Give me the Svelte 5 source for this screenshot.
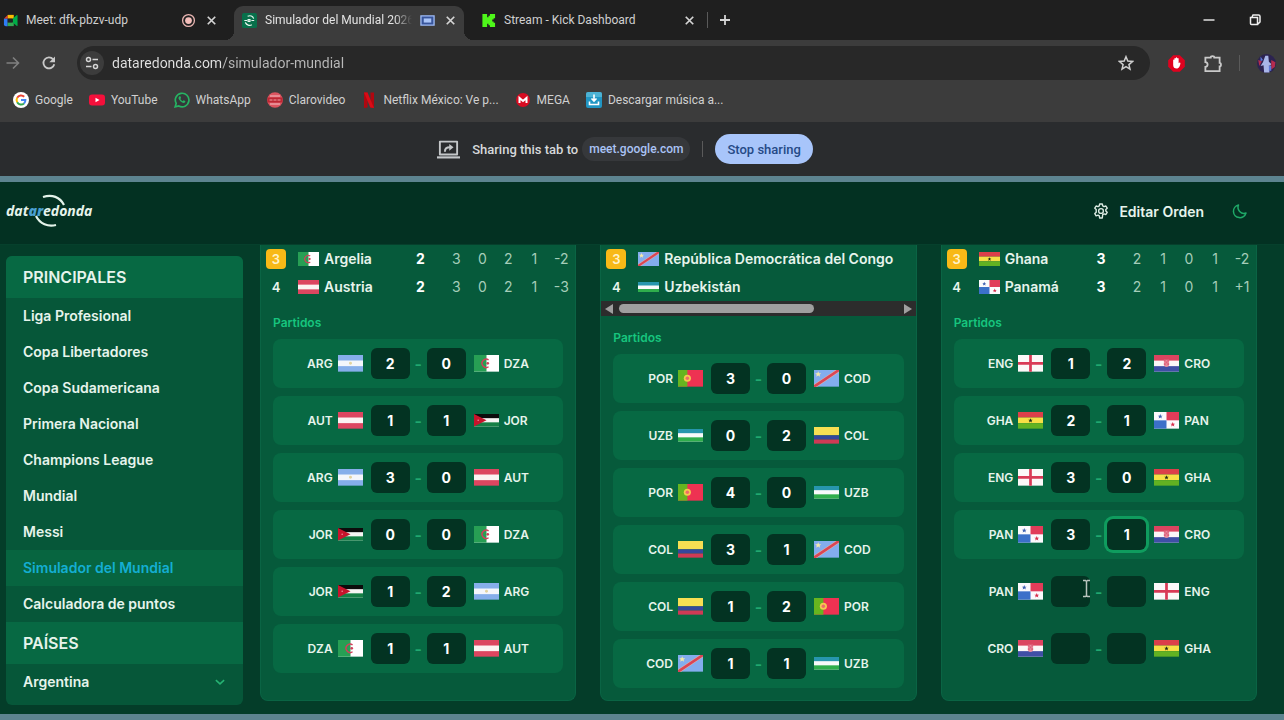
<script>
    let tabs = [
        { icon: "meet", title: "Meet: dfk-pbzv-udp", media: "record" },
        { icon: "redonda", title: "Simulador del Mundial 2026", media: "share", active: true },
        { icon: "kick", title: "Stream - Kick Dashboard" },
    ];

    let bookmarks = [
        { icon: "google", name: "Google" },
        { icon: "youtube", name: "YouTube" },
        { icon: "whatsapp", name: "WhatsApp" },
        { icon: "claro", name: "Clarovideo" },
        { icon: "netflix", name: "Netflix México: Ve p..." },
        { icon: "mega", name: "MEGA" },
        { icon: "download", name: "Descargar música a..." },
    ];

    let links = [
        "Liga Profesional",
        "Copa Libertadores",
        "Copa Sudamericana",
        "Primera Nacional",
        "Champions League",
        "Mundial",
        "Messi",
        "Simulador del Mundial",
        "Calculadora de puntos",
    ];
    let current = "Simulador del Mundial";

    let groups = [
        {
            teams: [
                { pos: 3, code: "DZA", name: "Argelia", stats: ["2", "3", "0", "2", "1", "-2"] },
                { pos: 4, code: "AUT", name: "Austria", stats: ["2", "3", "0", "2", "1", "-3"] },
            ],
            matches: [
                { home: "ARG", away: "DZA", score: ["2", "0"] },
                { home: "AUT", away: "JOR", score: ["1", "1"] },
                { home: "ARG", away: "AUT", score: ["3", "0"] },
                { home: "JOR", away: "DZA", score: ["0", "0"] },
                { home: "JOR", away: "ARG", score: ["1", "2"] },
                { home: "DZA", away: "AUT", score: ["1", "1"] },
            ],
        },
        {
            scroll: true,
            teams: [
                { pos: 3, code: "COD", name: "República Democrática del Congo", stats: [] },
                { pos: 4, code: "UZB", name: "Uzbekistán", stats: [] },
            ],
            matches: [
                { home: "POR", away: "COD", score: ["3", "0"] },
                { home: "UZB", away: "COL", score: ["0", "2"] },
                { home: "POR", away: "UZB", score: ["4", "0"] },
                { home: "COL", away: "COD", score: ["3", "1"] },
                { home: "COL", away: "POR", score: ["1", "2"] },
                { home: "COD", away: "UZB", score: ["1", "1"] },
            ],
        },
        {
            teams: [
                { pos: 3, code: "GHA", name: "Ghana", stats: ["3", "2", "1", "0", "1", "-2"] },
                { pos: 4, code: "PAN", name: "Panamá", stats: ["3", "2", "1", "0", "1", "+1"] },
            ],
            matches: [
                { home: "ENG", away: "CRO", score: ["1", "2"] },
                { home: "GHA", away: "PAN", score: ["2", "1"] },
                { home: "ENG", away: "GHA", score: ["3", "0"] },
                { home: "PAN", away: "CRO", score: ["3", "1"], editing: true },
                { home: "PAN", away: "ENG", score: ["", ""], pointer: true },
                { home: "CRO", away: "GHA", score: ["", ""] },
            ],
        },
    ];
</script>

{#snippet flag(code)}
    <svg class="flag" viewBox={code === "JOR" || code === "UZB" ? "0 0 24 12" : "0 0 24 16"} aria-hidden="true">
        {#if code === "ARG"}
            <path fill="#86aeea" d="M0 0h24v16H0z" />
            <path fill="#f4f6fb" d="M0 5.3h24v5.4H0z" />
            <circle cx="12" cy="8" r="1.4" fill="#e2d3a0" />
        {:else if code === "AUT"}
            <path fill="#dc4660" d="M0 0h24v16H0z" />
            <path fill="#fbf3f2" d="M0 5.3h24v5.4H0z" />
        {:else if code === "DZA"}
            <path fill="#fff" d="M0 0h24v16H0z" />
            <path fill="#279f54" d="M0 0h12v16H0z" />
            <path fill="none" stroke="#d0405a" stroke-width="1.4" d="M14 4.7a4 4 0 1 0 0 6.6" />
            <circle cx="13.2" cy="8" r="1.3" fill="#d0405a" />
        {:else if code === "JOR"}
            <path fill="#f5f5f3" d="M0 0h24v12H0z" />
            <path fill="#0c0c0c" d="M0 0h24v4H0z" />
            <path fill="#158045" d="M0 8h24v4H0z" />
            <path fill="#c8142c" d="M0 0l12 6L0 12z" />
            <circle cx="4" cy="6" r="0.7" fill="#f0a0a8" />
        {:else if code === "UZB"}
            <path fill="#f8fafa" d="M0 0h24v12H0z" />
            <path fill="#2796ad" d="M0 0h24v4H0z" />
            <path fill="#2fae4c" d="M0 8h24v4H0z" />
        {:else if code === "COD"}
            <path fill="#83adee" d="M0 0h24v16H0z" />
            <path stroke="#e9b9a0" stroke-width="3.4" d="M0 16L24 0" />
            <path stroke="#d94556" stroke-width="2.6" d="M0 16L24 0" />
            <path fill="#f3e9a8" d="M4 1.2l.8 2h2.1L5.3 4.5l.6 2L4 5.3 2.1 6.5l.6-2L1.1 3.2h2.1z" />
        {:else if code === "COL"}
            <path fill="#f7df53" d="M0 0h24v8H0z" />
            <path fill="#35479c" d="M0 8h24v4H0z" />
            <path fill="#cf3a55" d="M0 12h24v4H0z" />
        {:else if code === "POR"}
            <path fill="#ee3252" d="M0 0h24v16H0z" />
            <path fill="#67b51f" d="M0 0h9v16H0z" />
            <circle cx="9" cy="8" r="3.4" fill="#f4c94f" />
            <circle cx="9" cy="8" r="1.7" fill="#ee6c68" />
        {:else if code === "GHA"}
            <path fill="#dc3f4a" d="M0 0h24v5.4H0z" />
            <path fill="#f7df45" d="M0 5.3h24v5.4H0z" />
            <path fill="#62b222" d="M0 10.7h24V16H0z" />
            <path fill="#1d2a18" d="M12 6l.6 1.400h1.500l-1.200 1 .5 1.600-1.400-.9-1.400.9.500-1.600-1.200-1h1.500z" />
        {:else if code === "PAN"}
            <path fill="#fbfafc" d="M0 0h24v16H0z" />
            <path fill="#e13c59" d="M12 0h12v8H12z" />
            <path fill="#3c70c9" d="M0 8h12v8H0z" />
            <path fill="#3c5fb0" d="M6 2l.7 1.6h1.6L7 4.6l.5 1.7L6 5.3 4.5 6.3 5 4.6 3.700 3.600h1.600z" />
            <path fill="#d62d4a" d="M18 9.700l.7 1.600h1.600l-1.300 1 .5 1.700-1.500-1-1.500 1 .5-1.700-1.300-1h1.600z" />
        {:else if code === "CRO"}
            <path fill="#fbf6f7" d="M0 0h24v16H0z" />
            <path fill="#db4460" d="M0 0h24v5.400H0z" />
            <path fill="#3f4fa6" d="M0 10.700h24V16H0z" />
            <path fill="#e78a9c" d="M9.500 4.500h5v4.500a2.500 2.500 0 0 1-5 0z" />
            <path fill="#de5f7a" d="M9.500 4.500h1.700v1.700H9.500zM12.800 4.500h1.700v1.700h-1.700zM11.200 6.200h1.600v1.700h-1.600zM9.500 7.900h1.700v1.700H9.500zM12.800 7.900h1.700v1.700h-1.700z" />
        {:else if code === "ENG"}
            <path fill="#fbf8f8" d="M0 0h24v16H0z" />
            <path fill="#d93a56" d="M10.700 0h2.600v16h-2.600zM0 6.700h24v2.600H0z" />
        {/if}
    </svg>
{/snippet}

{#snippet icon(name)}
    <svg class="icon" viewBox="0 0 16 16" fill="none" aria-hidden="true">
        {#if name === "meet"}
            <path fill="#e53935" d="M1 6l4-4v4z" />
            <path fill="#fbbc04" d="M5 2h6.500v4H5z" />
            <path fill="#2e7cf6" d="M1 6h4v8H3a2 2 0 0 1-2-2z" />
            <path fill="#34a853" d="M5 10h6.500v4H5z" />
            <path fill="#00ac47" d="M10.500 5.500l4-3.200c.5-.4 1-.1 1 .5v10.400c0 .6-.5.900-1 .5l-4-3.200z" />
            <path fill="#202124" d="M5 6h5v4H5z" />
        {:else if name === "redonda"}
            <rect width="16" height="16" rx="2" fill="#08704b" />
            <path stroke="#e7f5ee" stroke-width="1.200" d="M6 3.500c3-1.500 5.500 0 6.500 2.500M3.500 10c1.500 3 4.500 4 7 2.500M2.500 8h3M6.500 7v2h2V7zM10 8h3" />
        {:else if name === "kick"}
            <path fill="#4ef71a" d="M1.500 1h5v3.500H8V3h1.500V1H15v4.500h-1.500V7H12v2h1.500v1.500H15V15H9.500v-2H8v-1.500H6.500V15h-5z" />
        {:else if name === "google"}
            <circle cx="8" cy="8" r="8" fill="#fff" />
            <path stroke="#ea4335" stroke-width="2" d="M4.200 5.800a4.400 4.400 0 0 1 7-1" />
            <path stroke="#fbbc05" stroke-width="2" d="M4.200 5.800a4.500 4.500 0 0 0 0 4.400" />
            <path stroke="#34a853" stroke-width="2" d="M4.200 10.200a4.400 4.400 0 0 0 6.800 1.200" />
            <path stroke="#4285f4" stroke-width="2" d="M8 8h4.400a4.400 4.400 0 0 1-1.400 3.400" />
        {:else if name === "youtube"}
            <rect y="2.500" width="16" height="11" rx="3" fill="#f5103b" />
            <path fill="#fff" d="M6.500 5.700v4.600l4-2.300z" />
        {:else if name === "whatsapp"}
            <path fill="#35383a" stroke="#27b262" stroke-width="1.700" d="M1.200 14.800l1-3.400A6.800 6.800 0 1 1 4.800 14z" />
            <path fill="#27b262" d="M5.200 4.500c.5-.5 1.100-.4 1.300.1l.6 1.400-.8 1c.5 1 1.300 1.700 2.300 2.200l1-.9 1.500.8c.4.200.4 1.200-.6 1.700C8.500 11.700 4.500 8 4.500 6c0-.6.300-1.100.7-1.500z" />
        {:else if name === "claro"}
            <circle cx="8" cy="8" r="7.800" fill="#dc5560" />
            <path stroke="#f3c3c6" d="M3 4h10M3 12h10" />
            <path fill="#bd2733" d="M.5 5.500h15v5H.5z" />
            <path stroke="#f0a3a8" d="M2.500 8h3M6.500 8h3M10.500 8h3" />
        {:else if name === "netflix"}
            <path fill="#b00710" d="M3 .5h3.500v15L3 16zM9.500.5H13V16l-3.500-.5z" />
            <path fill="#d90b16" d="M3 .5h3.500L13 16l-3.700-.5z" />
        {:else if name === "mega"}
            <circle cx="8" cy="8" r="7" fill="#d80c22" />
            <path stroke="#fff" stroke-width="2" d="M4.500 11V6L8 9l3.500-3v5" />
        {:else if name === "download"}
            <rect width="16" height="16" rx="2" fill="#2196c4" />
            <path fill="#69c5df" d="M0 2a2 2 0 0 1 2-2h12a2 2 0 0 1 2 2v3H0z" opacity=".6" />
            <path stroke="#fff" stroke-width="1.600" d="M8 2.500V9M5.500 6.500L8 9l2.500-2.500M3.500 9.500v3h9v-3" />
        {:else if name === "record"}
            <circle cx="8" cy="8" r="6.300" stroke="#e9b5b2" stroke-width="1.400" />
            <circle cx="8" cy="8" r="3.600" fill="#f3bdb9" />
        {:else if name === "share"}
            <path fill="#38559b" stroke="#9fbcf5" stroke-width="1.400" d="M1 3h14v10H1z" />
            <path fill="#a9c4f8" d="M4 5.800h8v4.400H4z" />
        {:else if name === "close"}
            <path stroke="#d5d5d5" stroke-width="1.800" d="M4 4l8 8M12 4l-8 8" />
        {:else if name === "plus"}
            <path stroke="#d5d5d5" stroke-width="1.800" d="M8 3v10M3 8h10" />
        {:else if name === "minimize"}
            <path stroke="#eee" stroke-width="1.400" d="M2.500 8h11" />
        {:else if name === "restore"}
            <path stroke="#eee" stroke-width="1.500" d="M3.500 5.500h7v7h-6a1 1 0 0 1-1-1zM5 5l1-2h5.500a1.500 1.500 0 0 1 1.500 1.500V10l-2 2" />
        {:else if name === "forward"}
            <path stroke="#808080" stroke-width="1.600" d="M1.500 8h12M8 2.500L13.500 8 8 13.500" />
        {:else if name === "reload"}
            <path stroke="#c9c9c9" stroke-width="1.800" d="M13.300 9.200A5.500 5.500 0 1 1 12.200 4.400" />
            <path fill="#c9c9c9" d="M14 1.500v5.700H8.300z" />
        {:else if name === "site"}
            <path stroke="#d5d5d5" stroke-width="1.700" d="M8.500 4.500H14M2 11.500h5.500" />
            <circle cx="4.500" cy="4.500" r="2" stroke="#d5d5d5" stroke-width="1.500" />
            <circle cx="11.500" cy="11.500" r="2" stroke="#d5d5d5" stroke-width="1.500" />
        {:else if name === "star"}
            <path stroke="#cfcfcf" stroke-width="1.500" d="M8 1.700l1.800 4.400 4.700.4-3.600 3.100 1.100 4.600L8 11.700l-4 2.500 1.100-4.600-3.600-3.100 4.700-.4z" />
        {:else if name === "block"}
            <path fill="#e0021f" d="M5.200 1h5.600L15 5.200v5.600L10.800 15H5.200L1 10.800V5.200z" />
            <path fill="#fff" d="M5.200 5.200c0-.8 1-.8 1 0V4c0-.9 1.200-.9 1.200 0v-.5c0-.9 1.200-.9 1.200 0V4c0-.9 1.200-.9 1.200 0v3.800c.6-.9 1.500-.8 1.500-.1 0 1.500-1.200 4.600-3.200 4.600-1.800 0-2.900-1.100-2.900-3z" />
        {:else if name === "puzzle"}
            <path stroke="#c9c9c9" stroke-width="1.500" d="M2 3h4.500c0-1.700 3-1.700 3 0H14v4.500c1.500 0 1.500 3 0 3v4H2v-3.700c2.500-.2 2.500-3.800 0-4z" />
        {:else if name === "avatar"}
            <circle cx="8" cy="8" r="8" fill="#2c2350" />
            <path fill="#a9b6e8" d="M7 1.500h2.500l.5 5 2 2-1 1.500-1-.5.500 6H6l-.5-6-2.500.5L5 7z" />
            <path fill="#b52b4e" d="M12 5l3.500 2-.5 4-3 2zM1 5l3 1-2 4z" />
            <path fill="#5d78d8" d="M3 2l2 3-2 1zM10 10h2v4h-2z" />
        {:else if name === "screen"}
            <path stroke="#c4c7c9" stroke-width="1.300" stroke-linejoin="round" d="M2 2.500h12v9H2z" />
            <path stroke="#c4c7c9" stroke-width="1.500" d="M0 13.500h16" />
            <path stroke="#c4c7c9" stroke-width="1.400" d="M5.500 9.500c0-2 1-3 3.500-3" />
            <path fill="#c4c7c9" d="M8.500 4.200v4.600L11.500 6.500z" />
        {:else if name === "gear"}
            <path stroke="#dcebe3" stroke-width="1.400" stroke-linejoin="round" d="M6.700 1h2.600l.4 1.900 1.300.7 1.900-.6 1.300 2.200-1.400 1.300v1.500l1.400 1.300-1.300 2.200-1.900-.6-1.300.7L9.300 15H6.700l-.4-2.100-1.300-.7-1.900.6-1.300-2.200 1.400-1.300V6.500L1.800 5.200 3.100 3l1.900.6 1.300-.7z" />
            <circle cx="8" cy="8" r="2.400" stroke="#dcebe3" stroke-width="1.400" />
        {:else if name === "moon"}
            <path stroke="#1fa968" stroke-width="1.500" stroke-linejoin="round" d="M14 10A6.400 6.400 0 1 1 6.500 2 6 6 0 0 0 14 10z" />
        {:else if name === "chevron"}
            <path stroke="#26b373" stroke-width="2" d="M2.500 5.500L8 10.500l5.500-5" />
        {/if}
    </svg>
{/snippet}

<div class="browser">
    <div class="tab-strip">
        {#each tabs as tab}
            <div class="tab" class:active={tab.active}>
                {@render icon(tab.icon)}
                <span class="tab-title">{tab.title}</span>
                {#if tab.media}
                    {@render icon(tab.media)}
                {/if}
                <button aria-label="Close tab">{@render icon("close")}</button>
            </div>
        {/each}
        <span class="divider"></span>
        <button class="new-tab" aria-label="New tab">{@render icon("plus")}</button>
        <div class="window-buttons">
            <button aria-label="Minimize">{@render icon("minimize")}</button>
            <button aria-label="Restore">{@render icon("restore")}</button>
        </div>
    </div>

    <div class="toolbar">
        <button aria-label="Forward">{@render icon("forward")}</button>
        <button aria-label="Reload">{@render icon("reload")}</button>
        <div class="address">
            <button class="site" aria-label="Site information">{@render icon("site")}</button>
            <input type="text" aria-label="Address" value="dataredonda.com/simulador-mundial" />
            <button aria-label="Bookmark this page">{@render icon("star")}</button>
        </div>
        <div class="extensions">
            <button aria-label="Ad blocker">{@render icon("block")}</button>
            <button aria-label="Extensions">{@render icon("puzzle")}</button>
            <span class="divider"></span>
            <button aria-label="Profile">{@render icon("avatar")}</button>
        </div>
    </div>

    <nav class="bookmarks" aria-label="Bookmarks">
        {#each bookmarks as bookmark}
            <a href="#{bookmark.icon}">{@render icon(bookmark.icon)}{bookmark.name}</a>
        {/each}
    </nav>

    <div class="share-bar">
        {@render icon("screen")}
        <span>Sharing this tab to</span>
        <a href="#meet">meet.google.com</a>
        <span class="divider"></span>
        <button>Stop sharing</button>
    </div>
</div>

<div class="site-frame">
    <header>
        <a class="logo" href="#home">
            <svg viewBox="0 0 88 34" fill="none" stroke="#e4f3ea" stroke-width="2.200" aria-hidden="true">
                <path d="M37 3c9-3 17 0 21 8M30 22c4 8 12 11 20 9" />
            </svg>
            <span>dat<b>ar</b>edonda</span>
        </a>
        <button class="edit">{@render icon("gear")}Editar Orden</button>
        <button class="theme" aria-label="Modo oscuro">{@render icon("moon")}</button>
    </header>

    <main>
        <nav class="sidebar" aria-label="Secciones">
            <h2>PRINCIPALES</h2>
            {#each links as link}
                <a href="#seccion" class:current={link === current}>{link}</a>
            {/each}
            <h2>PAÍSES</h2>
            <button>Argentina {@render icon("chevron")}</button>
        </nav>

        <div class="groups">
            {#each groups as group}
                <section class="group">
                    <table>
                        <tbody>
                            {#each group.teams as team}
                                <tr>
                                    <td class="pos"><span class:third={team.pos === 3}>{team.pos}</span></td>
                                    <th scope="row">
                                        <div class="name">{@render flag(team.code)}{team.name}</div>
                                    </th>
                                    {#each team.stats as stat, i}
                                        <td class:points={i === 0}>{stat}</td>
                                    {/each}
                                </tr>
                            {/each}
                        </tbody>
                    </table>
                    {#if group.scroll}
                        <div class="scrollbar">
                            <span class="arrow left"></span>
                            <div class="track"><div class="thumb"></div></div>
                            <span class="arrow right"></span>
                        </div>
                    {/if}
                    <h3>Partidos</h3>
                    <div class="matches">
                        {#each group.matches as match}
                            <div class="match" class:played={match.score[0] !== ""}>
                                <div class="team home">{match.home}{@render flag(match.home)}</div>
                                <input
                                    type="text"
                                    inputmode="numeric"
                                    aria-label="Goles {match.home}"
                                    bind:value={match.score[0]}
                                />
                                <span class="dash">-</span>
                                <input
                                    type="text"
                                    inputmode="numeric"
                                    class:editing={match.editing}
                                    aria-label="Goles {match.away}"
                                    bind:value={match.score[1]}
                                />
                                <div class="team">{@render flag(match.away)}{match.away}</div>
                                {#if match.pointer}
                                    <svg class="pointer" viewBox="0 0 9 19" fill="none" stroke="#b9c4be" stroke-width="1.500" aria-hidden="true">
                                        <path d="M1 1.500h2.500l1 1 1-1H8M1 17.500h2.500l1-1 1 1H8M4.500 2.500v14" />
                                    </svg>
                                {/if}
                            </div>
                        {/each}
                    </div>
                </section>
            {/each}
        </div>
    </main>
</div>

<style>
    :global(body) {
        margin: 0;
        background: #1f1f1f;
    }
    button {
        display: flex;
        align-items: center;
        padding: 0;
        border: none;
        background: none;
        font-family: inherit;
        color: inherit;
    }
    a {
        color: inherit;
        text-decoration: none;
    }
    .icon {
        width: 16px;
        height: 16px;
        flex: none;
    }
    .divider {
        width: 1px;
        height: 16px;
        background: #5a5a5a;
    }

    /**
        Browser window
    **/
    .browser {
        font-family: Roboto, "Open Sans", sans-serif;
        font-size: 12px;
        color: #d0d0d0;
        background: #3c3c3c;
    }
    .tab-strip {
        display: flex;
        align-items: center;
        height: 40px;
        background: #1f1f1f;
        overflow: hidden;
    }
    .tab {
        position: relative;
        display: flex;
        align-items: center;
        gap: 8px;
        box-sizing: border-box;
        width: 230px;
        height: 34px;
        margin: 6px 9px 0 0;
        padding: 0 6px 6px 8px;
        border-radius: 9px 9px 0 0;
    }
    .tab:first-child {
        width: 225px;
        padding-left: 3px;
    }
    .tab .icon {
        width: 15px;
        height: 15px;
    }
    .tab.active {
        background: #3c3c3c;
        color: #e3e3e3;
    }
    .tab.active:before,
    .tab.active:after {
        content: "";
        position: absolute;
        bottom: 0;
        width: 9px;
        height: 9px;
    }
    .tab.active:before {
        left: -9px;
        background: radial-gradient(circle at 0 0, transparent 9px, #3c3c3c 9px);
    }
    .tab.active:after {
        right: -9px;
        background: radial-gradient(circle at 100% 0, transparent 9px, #3c3c3c 9px);
    }
    .tab-title {
        flex: 1;
        overflow: hidden;
        white-space: nowrap;
    }
    .tab.active .tab-title {
        mask-image: linear-gradient(to right, #000 88%, transparent);
    }
    .tab-strip > .divider {
        margin-left: -5px;
    }
    .new-tab {
        margin-left: 9px;
    }
    .window-buttons {
        display: flex;
        gap: 30px;
        margin: 0 21px 0 auto;
    }
    .toolbar {
        display: flex;
        align-items: center;
        gap: 20px;
        padding: 6px 8px 6px 5px;
    }
    .address {
        display: flex;
        align-items: center;
        gap: 8px;
        flex: 1;
        height: 34px;
        padding: 0 16px 0 3px;
        border-radius: 17px;
        background: #282828;
    }
    .site {
        justify-content: center;
        width: 24px;
        height: 24px;
        border-radius: 50%;
        background: #3c3c3c;
    }
    .address input {
        flex: 1;
        padding: 0;
        border: none;
        outline: none;
        font-family: inherit;
        font-size: 14px;
        color: transparent;
        /* the domain is brighter than the path */
        background: linear-gradient(to right, #e3e3e3 110px, #bababa 110px);
        background-clip: text;
    }
    .extensions {
        display: flex;
        align-items: center;
        gap: 17px;
        margin-left: -3px;
    }
    .extensions .icon {
        width: 19px;
        height: 19px;
    }
    .bookmarks {
        display: flex;
        gap: 16px;
        height: 36px;
        padding: 0 13px;
    }
    .bookmarks a {
        display: flex;
        align-items: center;
        gap: 6px;
        height: 28px;
        white-space: nowrap;
    }
    .share-bar {
        display: flex;
        align-items: center;
        justify-content: center;
        gap: 12px;
        height: 54px;
        padding-right: 34px;
        background: #2a2c2e;
        font-size: 13px;
        font-weight: 500;
        color: #d6d9db;
    }
    .share-bar .icon {
        width: 23px;
        height: 23px;
    }
    .share-bar a {
        margin-left: -8px;
        padding: 0 7px;
        border-radius: 12px;
        background: #36383b;
        font-size: 12px;
        line-height: 24px;
        color: #aac3f5;
    }
    .share-bar button {
        height: 30px;
        padding: 0 12px;
        border-radius: 15px;
        background: #a8c5fa;
        font-size: 13px;
        font-weight: 500;
        color: #254a86;
    }

    /**
        Page
    **/
    .site-frame {
        border: solid #5d8490;
        border-width: 6px 0;
        background: #043d29;
        font-family: Inter, "Liberation Sans", sans-serif;
        color: #e6f4ec;
    }
    header {
        display: flex;
        align-items: center;
        height: 62px;
        padding: 0 36px 0 6px;
        border-bottom: 1px solid #06402c;
        background: #033122;
    }
    header button {
        font-size: 14px;
        font-weight: 600;
    }
    .logo {
        position: relative;
        margin: 0 auto 4px 0;
        font-family: "Open Sans", sans-serif;
        font-size: 14px;
        font-style: italic;
        font-weight: 700;
        line-height: 34px;
    }
    .logo svg {
        position: absolute;
        width: 88px;
        height: 34px;
    }
    .logo b {
        color: #4a9fd0;
    }
    .edit {
        gap: 10px;
        margin: 0 28px 4px 0;
    }
    .theme {
        margin-bottom: 4px;
    }
    main {
        display: grid;
        grid-template-columns: 237px minmax(0, 1fr);
        align-items: start;
        gap: 17px;
        padding: 0 27px 9px 6px;
    }

    /**
        Sidebar
    **/
    .sidebar {
        display: flex;
        flex-direction: column;
        margin-top: 11px;
        padding-bottom: 5px;
        border-radius: 6px;
        background: #065739;
        overflow: hidden;
    }
    .sidebar h2 {
        margin: 0;
        padding: 0 17px;
        background: #076943;
        font-size: 16px;
        font-weight: 600;
        line-height: 42px;
    }
    .sidebar a,
    .sidebar button {
        padding: 0 17px;
        font-size: 14px;
        font-weight: 600;
        line-height: 36px;
    }
    .sidebar button {
        justify-content: space-between;
    }
    .sidebar button .icon {
        width: 12px;
        height: 12px;
    }
    .sidebar .current {
        background: #076540;
        color: #14aed2;
    }

    /**
        Groups
    **/
    .groups {
        display: grid;
        grid-template-columns: repeat(3, minmax(0, 1fr));
        gap: 24px;
    }
    .group {
        padding-bottom: 12px;
        border: solid #0a6444;
        border-width: 0 1px 1px;
        border-radius: 0 0 8px 8px;
        background: #065a3b;
    }
    table {
        width: 100%;
        border-collapse: collapse;
        font-size: 14px;
        line-height: 20px;
    }
    td,
    th {
        width: 26px;
        height: 28px;
        padding: 0;
        text-align: center;
        font-weight: 400;
        color: #a5cdb9;
    }
    th {
        width: auto;
        font-weight: 600;
        color: #e6f4ec;
    }
    td.pos {
        width: 29px;
        font-size: 13px;
        font-weight: 600;
        color: #e6f4ec;
    }
    .pos span {
        display: block;
        width: 20px;
        margin-left: 5px;
    }
    .pos .third {
        border-radius: 4px;
        background: #f8b917;
        color: #fff3c9;
    }
    td.points {
        width: 46px;
        font-weight: 700;
        color: #fff;
    }
    td:last-child {
        width: 28px;
    }
    .name {
        display: flex;
        align-items: center;
        gap: 5px;
        padding-left: 8px;
        white-space: nowrap;
    }
    .flag {
        flex: none;
        width: 21px;
    }
    .scrollbar {
        display: flex;
        align-items: center;
        gap: 6px;
        height: 15px;
        padding: 0 4px;
        background: #2c2c2c;
    }
    .arrow {
        border: solid transparent;
        border-width: 5px 0;
    }
    .arrow.left {
        border-right: 8px solid #9f9f9f;
    }
    .arrow.right {
        border-left: 8px solid #9f9f9f;
    }
    .track {
        flex: 1;
    }
    .thumb {
        width: 70%;
        height: 9px;
        border-radius: 5px;
        background: #9f9f9f;
    }
    h3 {
        margin: 12px 12px 6px;
        font-size: 12px;
        font-weight: 600;
        line-height: 20px;
        color: #17c57e;
    }
    .matches {
        display: grid;
        gap: 8px;
        margin: 0 12px;
    }
    .match {
        position: relative;
        display: grid;
        grid-template-columns: 1fr 39px 17px 39px 1fr;
        align-items: center;
        height: 49px;
        border-radius: 8px;
    }
    .match.played {
        background: #076943;
    }
    .team {
        display: flex;
        align-items: center;
        gap: 5px;
        padding: 0 8px;
        font-size: 12px;
        font-weight: 600;
    }
    .home {
        justify-content: flex-end;
    }
    .team .flag {
        width: 25px;
    }
    .match input {
        box-sizing: border-box;
        width: 100%;
        height: 31px;
        padding: 0;
        border: none;
        border-radius: 6px;
        outline: none;
        background: #033322;
        font-family: inherit;
        font-size: 14px;
        font-weight: 700;
        text-align: center;
        color: #fff;
    }
    .match input.editing {
        box-shadow: 0 0 0 3px #0f9c5e;
    }
    .dash {
        text-align: center;
        font-weight: 600;
        color: #21a870;
    }
    .pointer {
        position: absolute;
        top: 12px;
        left: calc(50% - 17px);
        width: 9px;
        height: 19px;
    }
</style>
